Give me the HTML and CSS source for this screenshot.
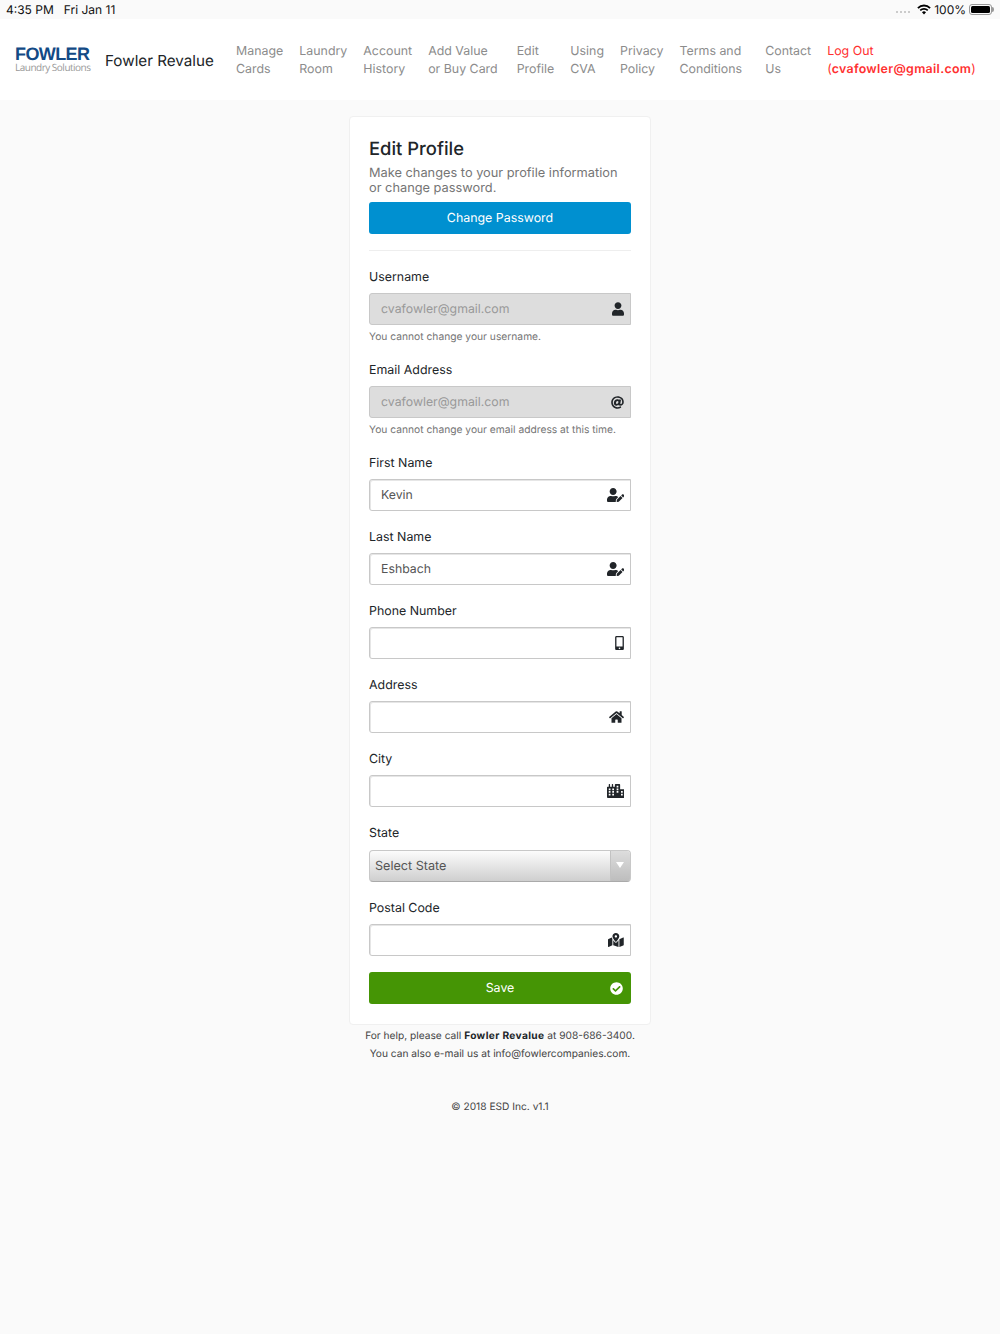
FILE: index.html
```html
<!DOCTYPE html>
<html lang="en">
<head>
    <meta charset="UTF-8">
    <title>Edit Profile - Fowler Revalue</title>
    <meta name="viewport" content="width=device-width, initial-scale=1">
    <link rel="stylesheet" href="styles.css">
</head>
<body>
    <svg class="icon-defs" width="0" height="0">
        <symbol id="i-user" viewBox="0 0 448 512"><path d="M224 256c70.7 0 128-57.3 128-128S294.7 0 224 0 96 57.3 96 128s57.3 128 128 128zm89.6 32h-16.7c-22.2 10.2-46.9 16-72.9 16s-50.6-5.8-72.9-16h-16.7C60.2 288 0 348.2 0 422.4V464c0 26.5 21.5 48 48 48h352c26.5 0 48-21.5 48-48v-41.6c0-74.2-60.2-134.4-134.4-134.4z"/></symbol>
        <symbol id="i-user-edit" viewBox="0 0 640 512"><path d="M224 256c70.7 0 128-57.3 128-128S294.7 0 224 0 96 57.3 96 128s57.3 128 128 128zm89.6 32h-16.7c-22.2 10.2-46.9 16-72.9 16s-50.6-5.8-72.9-16h-16.7C60.2 288 0 348.2 0 422.4V464c0 26.5 21.5 48 48 48h274.9c-2.4-6.8-3.3-14-2.5-21.3l6.8-60.9 1.2-11.1 7.9-7.9 77.3-77.3c-24.5-27.7-60-45.5-99.9-45.5zm45.3 145.3l-6.8 61c-1.100 10.2 7.500 18.800 17.600 17.700l60.900-6.800 137.900-137.900-71.700-71.700-137.900 137.900zM633 268.900L595.100 231c-9.300-9.300-24.500-9.300-33.900 0l-37.800 37.800-4.100 4.100 71.800 71.700 41.800-41.800c9.300-9.400 9.300-24.500.100-33.800z"/></symbol>
    </svg>

    <!-- barra de estado del iPad -->
    <div class="status-bar">
        <div class="status-left"><span>4:35 PM</span><span>Fri Jan 11</span></div>
        <div class="status-right">
            <span class="signal"><i></i><i></i><i></i><i></i></span>
            <svg class="wifi" viewBox="0 0 16 12" width="14" height="11"><path d="M8 11.6 5.7 9.1a3.3 3.3 0 0 1 4.6 0zM4.4 7.8 3 6.3a7.1 7.1 0 0 1 10 0l-1.4 1.5a5.1 5.1 0 0 0-7.2 0zM1.8 5.1.3 3.6a10.9 10.9 0 0 1 15.4 0l-1.5 1.5a8.8 8.8 0 0 0-12.4 0z"/></svg>
            <span>100%</span>
            <span class="battery"><b></b></span>
        </div>
    </div>

    <nav class="navbar">
        <a class="logo" href="#">
            <span class="logo-name">FOWLER</span>
            <span class="logo-sub">Laundry Solutions</span>
        </a>
        <a class="brand" href="#">Fowler Revalue</a>
        <div class="nav-links">
            <a href="#">Manage<br>Cards</a>
            <a href="#">Laundry<br>Room</a>
            <a href="#">Account<br>History</a>
            <a class="add-value" href="#">Add Value<br>or Buy Card</a>
            <a href="#">Edit<br>Profile</a>
            <a href="#">Using<br>CVA</a>
            <a href="#">Privacy<br>Policy</a>
            <a class="terms" href="#">Terms and<br>Conditions</a>
            <a href="#">Contact<br>Us</a>
            <a class="logout" href="#">Log Out<br>(<strong>cvafowler@gmail.com</strong>)</a>
        </div>
    </nav>

    <main class="card">
        <h1>Edit Profile</h1>
        <p class="lead">Make changes to your profile information or change password.</p>
        <button class="btn btn-blue" type="button">Change Password</button>
        <hr>

        <div class="field">
            <label>Username</label>
            <div class="input-wrap disabled">
                <input type="text" value="cvafowler@gmail.com" disabled>
                <svg class="icon" width="12" height="14" fill="#212529"><use href="#i-user"/></svg>
            </div>
            <small>You cannot change your username.</small>
        </div>

        <div class="field">
            <label>Email Address</label>
            <div class="input-wrap disabled">
                <input type="text" value="cvafowler@gmail.com" disabled>
                <svg class="icon" viewBox="0 0 512 512" width="13" height="13" fill="#212529"><path d="M256 8C118.941 8 8 118.919 8 256c0 137.059 110.919 248 248 248 48.154 0 95.342-14.14 135.408-40.223 12.005-7.815 14.625-24.288 5.552-35.372l-10.177-12.433c-7.671-9.371-21.179-11.667-31.373-5.129C325.92 429.757 291.314 440 256 440c-101.458 0-184-82.542-184-184S154.542 72 256 72c100.139 0 184 57.619 184 160 0 38.786-21.093 79.742-58.17 83.693-17.349-.454-16.91-12.857-13.476-30.024l23.433-121.11C394.653 149.75 383.308 136 368.225 136h-44.981a13.518 13.518 0 0 0-13.432 11.993l-.01.092c-14.697-17.901-40.448-21.775-59.971-21.775-74.58 0-137.831 62.234-137.831 151.46 0 65.303 36.785 105.87 96 105.87 26.984 0 57.369-15.637 74.991-38.333 9.522 34.104 40.613 34.103 70.71 34.103C462.609 379.41 504 307.798 504 232 504 95.653 394.023 8 256 8zm-21.68 304.43c-22.249 0-36.07-15.623-36.07-40.771 0-44.993 30.779-72.729 58.63-72.729 22.292 0 35.601 15.241 35.601 40.77 0 45.061-33.875 72.73-58.161 72.73z"/></svg>
            </div>
            <small>You cannot change your email address at this time.</small>
        </div>

        <div class="field">
            <label>First Name</label>
            <div class="input-wrap">
                <input type="text" value="Kevin">
                <svg class="icon" width="17.500" height="14" fill="#212529"><use href="#i-user-edit"/></svg>
            </div>
        </div>

        <div class="field">
            <label>Last Name</label>
            <div class="input-wrap">
                <input type="text" value="Eshbach">
                <svg class="icon" width="17.500" height="14" fill="#212529"><use href="#i-user-edit"/></svg>
            </div>
        </div>

        <div class="field">
            <label>Phone Number</label>
            <div class="input-wrap">
                <input type="tel">
                <svg class="icon" viewBox="0 0 320 512" width="9" height="14" fill="#212529"><path d="M272 0H48C21.5 0 0 21.5 0 48v416c0 26.5 21.5 48 48 48h224c26.5 0 48-21.5 48-48V48c0-26.5-21.5-48-48-48zM160 480c-17.7 0-32-14.3-32-32s14.3-32 32-32 32 14.3 32 32-14.3 32-32 32zm112-108c0 6.6-5.4 12-12 12H60c-6.6 0-12-5.4-12-12V60c0-6.6 5.4-12 12-12h200c6.6 0 12 5.4 12 12v312z"/></svg>
            </div>
        </div>

        <div class="field">
            <label>Address</label>
            <div class="input-wrap">
                <input type="text">
                <svg class="icon" viewBox="0 0 576 512" width="15" height="14" fill="#212529"><path d="M280.37 148.26L96 300.11V464a16 16 0 0 0 16 16l112.06-.29a16 16 0 0 0 15.92-16V368a16 16 0 0 1 16-16h64a16 16 0 0 1 16 16v95.64a16 16 0 0 0 16 16.05L464 480a16 16 0 0 0 16-16V300L295.67 148.26a12.19 12.19 0 0 0-15.3 0zM571.6 251.47L488 182.56V44.05a12 12 0 0 0-12-12h-56a12 12 0 0 0-12 12v72.61L318.47 43a48 48 0 0 0-61 0L4.34 251.47a12 12 0 0 0-1.6 16.9l25.5 31A12 12 0 0 0 45.15 301l235.22-193.74a12.19 12.19 0 0 1 15.3 0L530.9 301a12 12 0 0 0 16.9-1.6l25.5-31a12 12 0 0 0-1.7-16.93z"/></svg>
            </div>
        </div>

        <div class="field">
            <label>City</label>
            <div class="input-wrap">
                <input type="text">
                <svg class="icon" viewBox="0 0 640 512" width="17.500" height="14" fill="#212529"><path fill-rule="evenodd" d="M24 96h40V16C64 7 71 0 80 0h16c9 0 16 7 16 16v80h64V16c0-9 7-16 16-16h16c9 0 16 7 16 16v80h64V24c0-13 11-24 24-24h144c13 0 24 11 24 24v168h136c13 0 24 11 24 24v264c0 18-14 32-32 32H32c-18 0-32-14-32-32V120c0-13 11-24 24-24zM64 160v64h64v-64zm0 96v64h64v-64zm0 96v64h64v-64zm128-192v64h64v-64zm0 96v64h64v-64zm0 96v64h64v-64zM352 64v64h64V64zm0 96v64h64v-64zm0 96v64h64v-64zm160 0v64h64v-64zm0 96v64h64v-64z"/></svg>
            </div>
        </div>

        <div class="field field-select">
            <label>State</label>
            <div class="select-wrap">
                <span>Select State</span>
                <span class="select-arrow"></span>
            </div>
        </div>

        <div class="field">
            <label>Postal Code</label>
            <div class="input-wrap">
                <input type="text">
                <svg class="icon" viewBox="0 0 576 512" width="15.750" height="14" fill="#212529"><path d="M288 0c-69.59 0-126 56.41-126 126 0 56.26 82.35 158.8 113.9 196.02 6.39 7.54 17.82 7.54 24.2 0C331.65 284.8 414 182.26 414 126 414 56.41 357.59 0 288 0zm0 168c-23.2 0-42-18.800-42-42s18.800-42 42-42 42 18.800 42 42-18.800 42-42 42zM20.120 215.950A32.006 32.006 0 0 0 0 245.660v250.320c0 11.320 11.430 19.060 21.940 14.860L160 448V214.920c-8.840-15.980-16.070-31.540-21.250-46.420L20.120 215.950zM288 359.670c-14.070 0-27.380-6.180-36.510-16.960-19.660-23.200-40.570-49.620-59.490-76.720V448l192 64V266c-18.920 27.090-39.820 53.520-59.490 76.720-9.130 10.770-22.440 16.950-36.510 16.950zm266.060-198.510L416 224v288l139.880-55.950A31.996 31.996 0 0 0 576 426.340V176.020c0-11.320-11.430-19.060-21.940-14.860z"/></svg>
            </div>
        </div>

        <button class="btn btn-green" type="button">
            Save
            <svg class="btn-check" viewBox="0 0 512 512" width="13" height="13" fill="#fff"><path d="M504 256c0 136.967-111.033 248-248 248S8 392.967 8 256 119.033 8 256 8s248 111.033 248 248zM227.314 387.314l184-184c6.248-6.248 6.248-16.379 0-22.627l-22.627-22.627c-6.248-6.249-16.379-6.249-22.628 0L216 308.118l-70.059-70.059c-6.248-6.248-16.379-6.248-22.628 0l-22.627 22.627c-6.248 6.248-6.248 16.379 0 22.627l104 104c6.249 6.249 16.379 6.249 22.628.001z"/></svg>
        </button>
    </main>

    <footer class="footer">
        <p>For help, please call <strong>Fowler Revalue</strong> at 908-686-3400.</p>
        <p>You can also e-mail us at info@fowlercompanies.com.</p>
        <p class="copyright">© 2018 ESD Inc. v1.1</p>
    </footer>
</body>
</html>
```

FILE: styles.css
```css
* {
    box-sizing: border-box;
}
body {
    margin: 0;
    min-height: 1334px;
    background: #fafafa;
    font-family: 'Inter', 'Liberation Sans', Arial, sans-serif;
    color: #212529;
    text-rendering: geometricPrecision;
}
.icon-defs {
    position: absolute;
}
.status-bar {
    height: 19px;
    padding: 0 6px;
    display: flex;
    align-items: center;
    justify-content: space-between;
    font-size: 12px;
    color: #111;
}
.status-left {
    display: flex;
    gap: 10px;
}
.status-right {
    display: flex;
    align-items: center;
    gap: 5px;
}
.signal {
    display: flex;
    gap: 1.500px;
    margin-top: 5px;
    margin-right: 2px;
}
.signal i {
    width: 2.500px;
    height: 2.500px;
    border-radius: 50%;
    background: #bbb;
}
.wifi {
    margin-right: -2px;
}
.battery {
    position: relative;
    width: 23px;
    height: 11px;
    padding: 1px;
    margin-right: 2px;
    margin-left: -2px;
    border: 1px solid #999;
    border-radius: 3px;
}
.battery b {
    display: block;
    height: 100%;
    background: #000;
    border-radius: 1.500px;
}
.battery::after {
    content: "";
    position: absolute;
    right: -3px;
    top: 2px;
    width: 2px;
    height: 5px;
    background: #999;
    border-radius: 0 2px 2px 0;
}
.navbar {
    height: 81px;
    padding: 1px 16px 0 15px;
    display: flex;
    align-items: center;
    background: #fff;
}
.logo {
    width: 75px;
    margin-top: -1px;
    margin-right: 15px;
    display: flex;
    flex-direction: column;
    text-decoration: none;
}
.logo-name {
    font-family: 'Liberation Sans', Arial, sans-serif;
    font-size: 18px;
    font-weight: 700;
    line-height: 15px;
    color: #134a85;
    letter-spacing: -0.6px;
    white-space: nowrap;
}
.logo-sub {
    font-family: 'Open Sans', sans-serif;
    font-size: 10px;
    line-height: 11px;
    color: #999;
    letter-spacing: -0.5px;
    white-space: nowrap;
}
.brand {
    width: 108px;
    font-size: 15.200px;
    color: #212529;
    text-decoration: none;
    white-space: nowrap;
}
.nav-links {
    margin-left: 15px;
    display: flex;
}
.nav-links a {
    padding: 0 8px;
    font-size: 12.400px;
    line-height: 18.500px;
    color: #8c8c8c;
    text-decoration: none;
    white-space: nowrap;
}
.nav-links .add-value {
    padding-right: 11px;
}
.nav-links .terms {
    padding-right: 15px;
}
.nav-links .logout {
    color: #ff3030;
}
.logout strong {
    font-weight: 600;
    letter-spacing: 0.3px;
}
.card {
    width: 302px;
    margin: 16px auto 0;
    padding: 20px 19px;
    background: #fff;
    border: 1px solid #f0f0f0;
    border-radius: 4px;
}
h1 {
    margin: 0;
    font-size: 18.400px;
    font-weight: 500;
    line-height: 24px;
}
.lead {
    margin: 5px 0 6px;
    font-size: 12.800px;
    line-height: 15px;
    color: #757575;
}
.btn {
    position: relative;
    display: block;
    width: 100%;
    height: 32px;
    padding: 0;
    border: 0;
    border-radius: 3px;
    color: #fff;
    font-family: inherit;
    font-size: 12.400px;
    line-height: 32px;
    text-rendering: geometricPrecision;
}
.btn-blue {
    background: #0090d0;
}
.btn-green {
    background: #459505;
}
.btn-check {
    position: absolute;
    right: 8px;
    top: 10px;
}
hr {
    margin: 16px 0;
    border: 0;
    border-top: 1px solid #eee;
}
.field {
    margin-bottom: 16px;
}
label {
    display: block;
    padding-top: 1px;
    margin-bottom: 7px;
    font-size: 12.400px;
    line-height: 18px;
}
.field-select label {
    margin-bottom: 8px;
}
small {
    display: block;
    margin-top: 5px;
    font-size: 10.250px;
    line-height: 14px;
    color: #757575;
}
.input-wrap {
    height: 32px;
    padding-right: 6px;
    display: flex;
    align-items: center;
    justify-content: flex-end;
    background: #fff;
    border: 1px solid #c8c8c8;
    border-radius: 3px 0 0 3px;
    box-shadow: inset 1px 1px 0 #e6e6e6;
}
.input-wrap.disabled {
    background: #ddd;
    box-shadow: none;
}
.input-wrap input {
    flex: 1;
    min-width: 0;
    height: 100%;
    padding: 0 0 1px 11px;
    border: 0;
    outline: 0;
    background: transparent;
    font-family: inherit;
    font-size: 12.300px;
    color: #555;
    text-rendering: geometricPrecision;
}
.input-wrap input:disabled {
    color: #999;
}
.select-wrap {
    height: 32px;
    padding-left: 5px;
    display: flex;
    align-items: center;
    justify-content: space-between;
    overflow: hidden;
    background: linear-gradient(#fcfcfc, #cfcfcf);
    border: 1px solid #c8c8c8;
    border-bottom-color: #aaa;
    border-radius: 4px;
    font-size: 12.600px;
    color: #555;
}
.select-arrow {
    position: relative;
    width: 20px;
    height: 100%;
    background: linear-gradient(#ddd, #bdbdbd);
    border-left: 1px solid #c2c2c2;
}
.select-arrow::after {
    content: "";
    position: absolute;
    left: 5px;
    top: 11px;
    border: 4px solid transparent;
    border-top: 6px solid #fff;
    border-bottom: 0;
}
.footer {
    padding-top: 2px;
    text-align: center;
    font-size: 10.200px;
    color: #444;
}
.footer p {
    margin: 0;
    line-height: 18px;
}
.footer strong {
    font-weight: 700;
    letter-spacing: 0.35px;
    color: #212529;
}
.footer .copyright {
    margin-top: 35px;
}
```
